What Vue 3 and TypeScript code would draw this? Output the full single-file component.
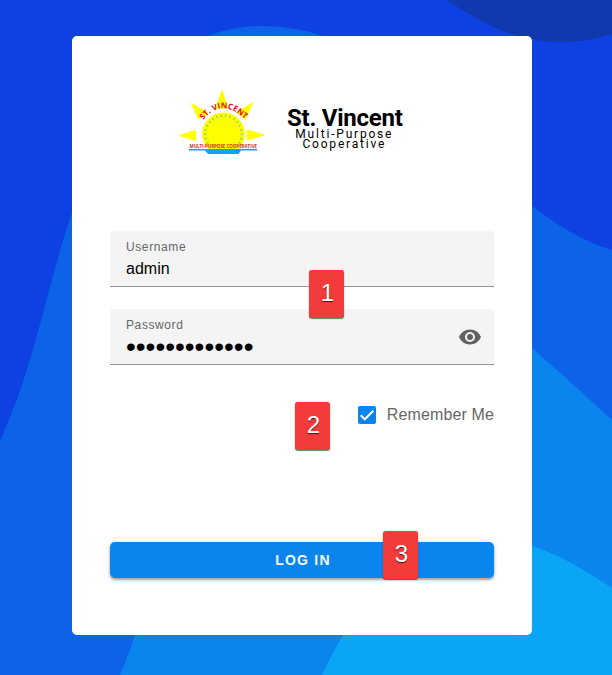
<script setup lang="ts">
import { computed, ref } from 'vue'

interface Marker {
  label: string
  place: string
}

const username = ref('admin')
const password = ref('administrator')
const remember = ref(true)
const revealed = ref(false)
const passwordType = computed(() => (revealed.value ? 'text' : 'password'))

const markers: Marker[] = [
  { label: '1', place: 'marker-fields' },
  { label: '2', place: 'marker-remember' },
  { label: '3', place: 'marker-submit' },
]

const ticks: number[] = Array.from({ length: 18 }, (_, i) => -119 + i * 14)
</script>

<template>
  <main class="page">
    <svg class="waves" viewBox="0 0 612 675" aria-hidden="true">
      <path fill="#1139ad" d="M447 0C482 23 515 42 560 42C580 42 596 39 612 34V0Z" />
      <path
        fill="#0c63e7"
        d="M0 441C35 365 47 285 72 213C105 115 165 26 262 26C380 26 430 125 532 206C557 225 584 242 612 250V675H0Z"
      />
      <path fill="#0a85ee" d="M120 675C126 661 130 650 135 635C175 500 220 300 350 270C430 250 490 315 532 348C562 374 588 398 612 420V675Z" />
      <path fill="#0aa5f4" d="M322 675C329 661 335 648 343 635C390 560 450 521 532 546C563 556 586 571 612 588V675Z" />
    </svg>

    <form class="card" @submit.prevent>
      <header class="brand">
        <svg class="logo" viewBox="0 0 88 68" aria-hidden="true">
          <g fill="#ff0" stroke="#ff0" stroke-width="1" stroke-linejoin="round">
            <path d="M44 2.500L49.500 20H38Z" />
            <path d="M13.500 15.500L30 25L20.500 31Z" />
            <path d="M74.500 15L58.500 24.500L67.500 31Z" />
            <path d="M1.500 47.500L17.500 42.500V52.500Z" />
            <path d="M86 47L69.500 42V52Z" />
            <path d="M32 62A21 21 0 1 1 59 62Z" />
          </g>
          <g stroke="#63c884" stroke-width="1">
            <line
              v-for="angle in ticks"
              :key="angle"
              x1="45.500"
              x2="45.500"
              y1="26.500"
              y2="29"
              :transform="`rotate(${angle} 45.500 46)`"
            />
          </g>
          <path id="title-arc" fill="none" d="M25 32Q44.500 8.500 67.500 32" />
          <text class="logo-title"><textPath href="#title-arc" textLength="49">ST. VINCENT</textPath></text>
          <text class="logo-sub" x="11.500" y="60" textLength="67.500" lengthAdjust="spacingAndGlyphs">MULTI-PURPOSE COOPERATIVE</text>
          <path fill="#0aa5f4" d="M11 61H79V62.500H63L60.500 66H30L27 62.500H11Z" />
        </svg>
        <div class="brand-text">
          <h1>St. Vincent</h1>
          <p>Multi-Purpose<br />Cooperative</p>
        </div>
      </header>

      <label class="field">
        <span class="caption">Username</span>
        <input v-model="username" type="text" />
      </label>
      <label class="field">
        <span class="caption">Password</span>
        <input v-model="password" :class="{ secret: !revealed }" :type="passwordType" />
        <svg class="eye" viewBox="0 0 24 24" @click.prevent="revealed = !revealed">
          <path
            d="M12 9a3 3 0 0 0-3 3 3 3 0 0 0 3 3 3 3 0 0 0 3-3 3 3 0 0 0-3-3m0 8a5 5 0 0 1-5-5 5 5 0 0 1 5-5 5 5 0 0 1 5 5 5 5 0 0 1-5 5m0-12.500C7 4.500 2.730 7.610 1 12c1.730 4.390 6 7.500 11 7.500s9.270-3.110 11-7.500c-1.730-4.390-6-7.500-11-7.500z"
          />
        </svg>
      </label>

      <label class="remember">
        <input v-model="remember" type="checkbox" class="native" />
        <svg class="box" viewBox="0 0 18 18" aria-hidden="true">
          <rect width="18" height="18" rx="2" />
          <path v-if="remember" d="M2.700 9.200L6.800 13.300L15.300 4.700" />
        </svg>
        <span>Remember Me</span>
      </label>

      <button class="submit" type="submit">LOG IN</button>

      <span v-for="marker in markers" :key="marker.label" class="marker" :class="marker.place">{{ marker.label }}</span>
    </form>
  </main>
</template>

<style>
body {
  margin: 0;
}
</style>

<style scoped>
.page {
  position: relative;
  box-sizing: border-box;
  height: 675px;
  padding: 36px 80px 40px 72px;
  overflow: hidden;
  background: #0d41e1;
  font-family: "Liberation Sans", Arial, sans-serif;
}
.waves {
  position: absolute;
  inset: 0;
  width: 612px;
  height: 675px;
}
.card {
  position: relative;
  display: flex;
  flex-direction: column;
  box-sizing: border-box;
  width: 460px;
  height: 599px;
  padding: 52px 38px 57px;
  border-radius: 5px;
  background: #fff;
}
.brand {
  display: flex;
  align-items: flex-start;
  gap: 20px;
  height: 143px;
  padding-left: 68px;
}
.logo {
  flex: none;
  width: 88px;
  height: 68px;
}
.logo-title {
  fill: #e8101a;
  font: 700 8px "Open Sans", sans-serif;
}
.logo-sub {
  fill: #f0202a;
  font: 700 5.500px "Open Sans", sans-serif;
}
.brand-text {
  padding-top: 18px;
  color: #000;
  font-family: Roboto, sans-serif;
  text-align: center;
}
.brand-text h1 {
  margin: 0 0 -1px 1px;
  font-size: 24px;
  font-weight: 700;
  line-height: 24px;
  letter-spacing: -0.250px;
  white-space: nowrap;
}
.brand-text p {
  margin: 0;
  font-size: 12px;
  line-height: 10px;
  letter-spacing: 1.800px;
}
.field {
  position: relative;
  display: flex;
  flex-direction: column;
  box-sizing: border-box;
  height: 56px;
  margin-bottom: 22px;
  padding: 8px 16px 0;
  border-bottom: 1px solid #949494;
  border-radius: 4px 4px 0 0;
  background: #f4f4f4;
}
.caption {
  color: #666;
  font-size: 12px;
  line-height: 16px;
  letter-spacing: 0.600px;
}
.field input {
  width: 280px;
  height: 24px;
  margin-top: 2px;
  padding: 0;
  border: 0;
  outline: 0;
  background: transparent;
  color: #000;
  font: 16px "Liberation Sans", Arial, sans-serif;
}
.field .secret {
  font-size: 28px;
}
.eye {
  position: absolute;
  top: 16px;
  right: 12px;
  width: 24px;
  height: 24px;
  fill: #616161;
}
.remember {
  display: flex;
  align-items: center;
  align-self: flex-end;
  gap: 11px;
  height: 24px;
  margin-top: 16px;
  color: #666;
  font-size: 16px;
  letter-spacing: 0.130px;
  white-space: nowrap;
}
.native {
  position: absolute;
  opacity: 0;
}
.box {
  width: 18px;
  height: 18px;
}
.box rect {
  fill: #0a85ee;
}
.box path {
  fill: none;
  stroke: #fff;
  stroke-width: 2;
}
.submit {
  height: 36px;
  margin-top: auto;
  padding: 0 0 0 2px;
  border: 0;
  border-radius: 5px;
  background: #0a85ee;
  box-shadow: 0 2px 2px rgba(0, 0, 0, 0.24), 0 1px 4px rgba(0, 0, 0, 0.24);
  color: #f1f7fe;
  font: 700 14px "Liberation Sans", Arial, sans-serif;
  letter-spacing: 1.250px;
}
.marker {
  position: absolute;
  box-sizing: border-box;
  width: 35px;
  height: 48px;
  border-radius: 3px;
  background: #f33b3b;
  box-shadow: 0 1px 1px rgba(0, 0, 0, 0.5), 0 0 1px rgba(0, 0, 0, 0.3);
  color: #fff;
  font-size: 24px;
  line-height: 45px;
  text-align: center;
  text-indent: 2px;
  text-shadow: 0 1px 1px rgba(0, 0, 0, 0.7);
}
.marker-fields {
  top: 234px;
  left: 237px;
}
.marker-remember {
  top: 366px;
  left: 223px;
}
.marker-submit {
  top: 495px;
  left: 311px;
}
</style>
